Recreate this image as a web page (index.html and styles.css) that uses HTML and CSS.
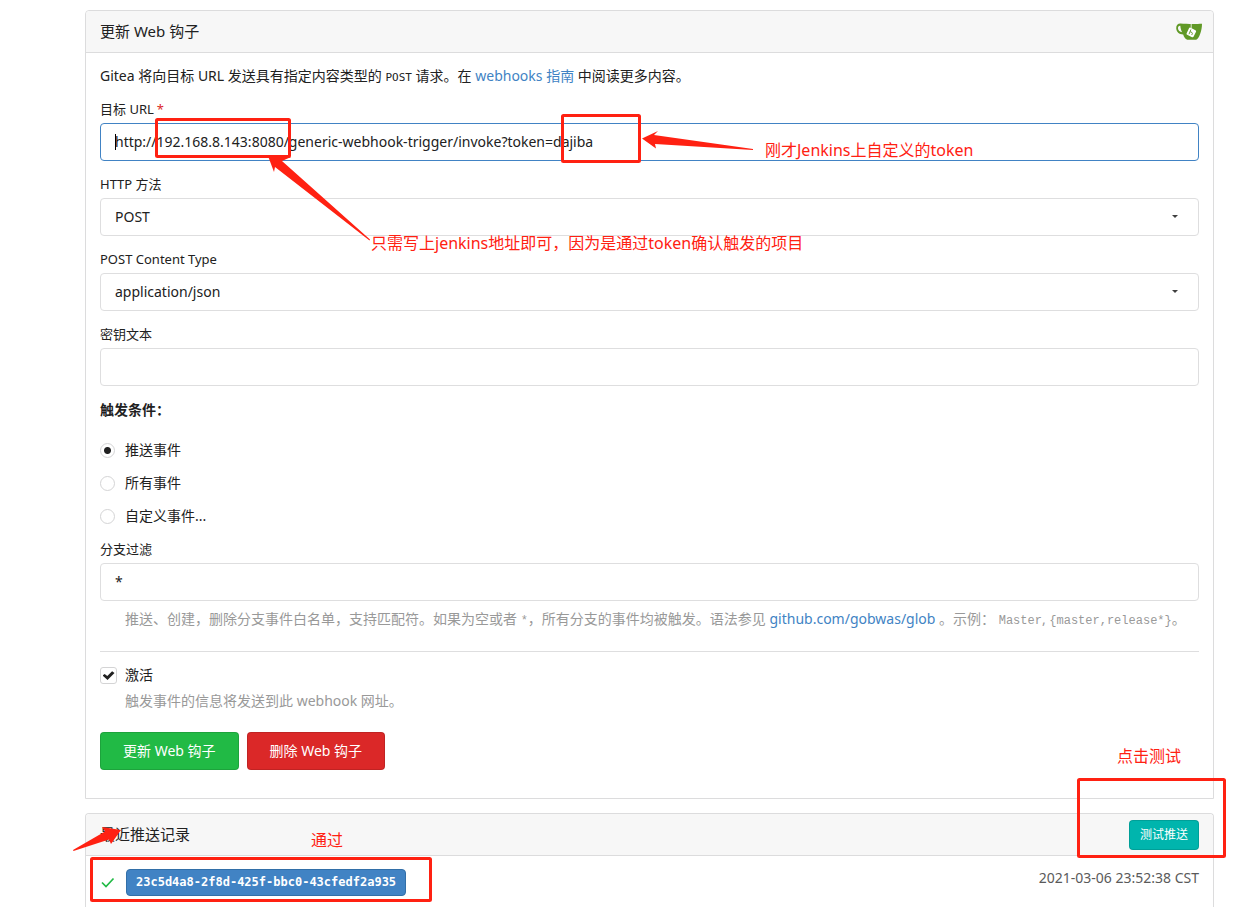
FILE: index.html
```html
<!DOCTYPE html>
<html lang="zh-CN">
<head>
<meta charset="utf-8">
<meta name="viewport" content="width=device-width, initial-scale=1">
<title>更新 Web 钩子</title>
<link rel="stylesheet" href="styles.css">
</head>
<body>
<main class="page">
  <section class="card">
    <header class="card-header">
      <h1 class="title">更新 Web 钩子</h1>
      <svg class="logo" viewBox="0 0 26 18" aria-label="Gitea">
        <path fill="#609926" fill-rule="evenodd" d="M4.500 .6C2 .5 0 2.300 .2 5.300C.4 9.200 3 11.200 7.200 11.500C7.800 13.900 9.400 16 11.200 16.700H20.200C23.200 15.600 26 7.500 26 1V.8C20 1.200 10 1.100 4.500 .6ZM4.300 2.800C4.600 5.400 5.100 7.700 6.200 9.200C3.700 8.900 2.100 7.600 2 5.200C1.900 3.500 2.900 2.600 4.300 2.800Z"/>
        <path d="M15.200 1V5.600" stroke="#fff" stroke-width=".8"/>
        <rect x="11.500" y="5.500" width="7.800" height="7.800" rx="1.200" fill="#fff" transform="rotate(26 15.200 9.300)"/>
        <path d="M14.900 6.500L13 11.200M14.100 8.700L16 9.500Q16.700 9.900 16.300 10.800L15.700 12" fill="none" stroke="#609926" stroke-width=".9"/>
      </svg>
    </header>
    <form class="card-body" onsubmit="return false">
      <p class="intro">Gitea 将向目标 URL 发送具有指定内容类型的 <code>POST</code> 请求。在 <a href="#guide">webhooks 指南</a> 中阅读更多内容。</p>
      <div class="field">
        <label for="url">目标 URL<span class="required">*</span></label>
        <div class="control">
          <input class="input focused" id="url" type="text" value="http://192.168.8.143:8080/generic-webhook-trigger/invoke?token=dajiba">
          <span class="caret"></span>
        </div>
      </div>
      <div class="field">
        <label for="method">HTTP 方法</label>
        <div class="control">
          <select class="input" id="method"><option>POST</option><option>GET</option></select>
          <span class="arrow"></span>
        </div>
      </div>
      <div class="field">
        <label for="ctype">POST Content Type</label>
        <div class="control">
          <select class="input" id="ctype"><option>application/json</option></select>
          <span class="arrow"></span>
        </div>
      </div>
      <div class="field">
        <label for="secret">密钥文本</label>
        <input class="input" id="secret" type="password">
      </div>
      <fieldset class="events">
        <legend>触发条件：</legend>
        <label class="choice"><input type="radio" name="events" checked><span>推送事件</span></label>
        <label class="choice"><input type="radio" name="events"><span>所有事件</span></label>
        <label class="choice"><input type="radio" name="events"><span>自定义事件...</span></label>
      </fieldset>
      <div class="field">
        <label for="branch">分支过滤</label>
        <input class="input" id="branch" type="text" value="*">
        <p class="help branch-help">推送、创建，删除分支事件白名单，支持匹配符。如果为空或者 <code>*</code>，所有分支的事件均被触发。语法参见 <a href="#glob">github.com/gobwas/glob</a> 。示例： <code>Master</code>, <code>{master,release*}</code>。</p>
      </div>
      <hr class="divider">
      <div class="active">
        <label class="choice"><input type="checkbox" checked><span>激活</span></label>
        <p class="help">触发事件的信息将发送到此 webhook 网址。</p>
      </div>
      <div class="actions">
        <button class="button green" type="submit">更新 Web 钩子</button>
        <button class="button red" type="button">删除 Web 钩子</button>
      </div>
    </form>
  </section>

  <section class="card history">
    <header class="card-header">
      <h2 class="title">最近推送记录</h2>
      <button class="button teal" type="button">测试推送</button>
    </header>
    <div class="card-body delivery">
      <svg class="check" viewBox="0 0 15 18" aria-hidden="true"><path d="M2 8.500L6 12.500L13.500 4.500" fill="none" stroke="#21ba45" stroke-width="1.700"/></svg>
      <a class="uuid" href="#delivery">23c5d4a8-2f8d-425f-bbc0-43cfedf2a935</a>
      <time class="time">2021-03-06 23:52:38 CST</time>
    </div>
  </section>

  <div class="notes">
    <svg class="marks" width="1250" height="907" viewBox="0 0 1250 907" aria-hidden="true">
      <g fill="none" stroke="#ff2112" stroke-width="3">
        <rect x="156.500" y="119.500" width="133" height="37" rx="1"/>
        <rect x="562.500" y="115.500" width="77" height="46" rx="1"/>
        <rect x="1078.500" y="779.500" width="146" height="77" rx="1"/>
        <rect x="91.500" y="858.500" width="339" height="42" rx="1"/>
      </g>
      <g fill="#ff2112">
        <path d="M642 138.500L658 131L654 135L753 149V150L655 144L656 148.500Z"/>
        <path d="M268 156L291 157L282 161L370 239.500L369.500 240.500L275 167L274 172Z"/>
        <path d="M121 830L102 827L105 831.500L73 850L73.500 851L109 839.500L111 844Z"/>
      </g>
    </svg>
    <span class="note note-token">刚才Jenkins上自定义的token</span>
    <span class="note note-address">只需写上jenkins地址即可，因为是通过token确认触发的项目</span>
    <span class="note note-test">点击测试</span>
    <span class="note note-pass">通过</span>
  </div>
</main>
</body>
</html>
```
FILE: styles.css
```css
* { box-sizing: border-box; }
body {
  margin: 0;
  background: #fff;
  color: #212121;
  font: 14px/19px "Noto Sans", "Noto Sans CJK SC", sans-serif;
}
h1, h2, p, fieldset, legend { margin: 0; padding: 0; }
a { color: #4183c4; text-decoration: none; }
code { font: 11px "DejaVu Sans Mono", monospace; }
input, select, button { font: inherit; color: inherit; }
.page {
  position: relative;
  display: flex;
  flex-direction: column;
  gap: 14px;
  height: 100vh;
  padding: 10px 36px 0 85px;
  overflow: hidden;
}
.card {
  flex: none;
  border: 1px solid #dcdcdd;
  border-radius: 4px 4px 0 0;
}
.history { flex: 1 0 auto; border-bottom: 0; }
.card-header {
  display: flex;
  align-items: center;
  justify-content: space-between;
  height: 42px;
  padding: 0 14px;
  border-bottom: 1px solid #dcdcdd;
  border-radius: 4px 4px 0 0;
  background: #f7f7f7;
}
.title { padding-bottom: 2px; font-size: 15px; font-weight: 400; line-height: 20px; }
.logo { width: 26px; height: 18px; margin-right: -3px; }
.card-body {
  display: flex;
  flex-direction: column;
  gap: 14px;
  padding: 13px 14px 28px;
}
.intro { margin-bottom: 1px; }
.field { display: flex; flex-direction: column; }
.field > label { margin-bottom: 5px; font-size: 13px; line-height: 18px; }
.required { margin-left: 3px; color: #db2828; }
.control { position: relative; }
.input {
  display: block;
  width: 100%;
  height: 38px;
  padding: 0 14px 2px;
  border: 1px solid #dededf;
  border-radius: 4px;
  background: #fff;
  outline: 0;
  appearance: none;
}
.focused { border-color: #4183c4; }
.caret {
  position: absolute;
  top: 11px;
  left: 15px;
  width: 1px;
  height: 16px;
  background: #000;
}
.arrow {
  position: absolute;
  top: 17px;
  right: 21px;
  border: 3px solid transparent;
  border-top-color: #404040;
  border-bottom: 0;
}
.events {
  display: flex;
  flex-direction: column;
  gap: 14px;
  border: 0;
}
.events legend { margin-bottom: 22px; font-weight: 700; }
.choice { display: flex; align-items: center; gap: 10px; height: 19px; }
.choice span { padding-bottom: 2px; }
.choice input {
  width: 15px;
  height: 15px;
  margin: 0;
  border: 1px solid #d4d4d5;
  border-radius: 50%;
  appearance: none;
}
.choice input[type="radio"]:checked { background: radial-gradient(circle, #212121 3px, #fff 4px); }
.choice input[type="checkbox"] {
  display: grid;
  place-items: center;
  width: 17px;
  height: 17px;
  border-radius: 3px;
}
.choice input[type="checkbox"]::before {
  content: "";
  width: 12px;
  height: 10px;
  background: #212121;
  clip-path: polygon(0 50%, 18% 34%, 40% 56%, 80% 8%, 100% 24%, 42% 96%);
}
.active .choice { gap: 8px; }
.help { padding-left: 25px; color: #999; }
.help code { font: 12px "Liberation Mono", monospace; }
.branch-help { margin-top: 8px; margin-bottom: 1px; }
.divider {
  width: 100%;
  margin: 8px 0 0;
  border: 0;
  border-top: 1px solid #dededf;
}
.active { display: flex; flex-direction: column; gap: 6px; margin-bottom: 1px; }
.actions { display: flex; gap: 8px; margin-top: 7px; }
.button {
  height: 38px;
  padding: 0 22px 2px;
  border: 1px solid rgba(0, 0, 0, 0.12);
  border-radius: 4px;
  color: #fff;
}
.green { background: #21ba45; }
.red { background: #db2828; }
.teal { height: 30px; padding: 0 10px; background: #00b5ad; font-size: 12px; }
.delivery { flex-direction: row; align-items: center; gap: 11px; }
.check { width: 15px; height: 18px; }
.uuid {
  padding: 4px 9px;
  border: 1px solid #326fa8;
  border-radius: 4px;
  background: #4183c4;
  color: #fff;
  font: 700 12px/17px "DejaVu Sans Mono", monospace;
}
.time { margin-left: auto; align-self: flex-start; color: #5a5a5a; line-height: 17px; }
.notes { position: absolute; top: 0; left: 0; pointer-events: none; }
.marks { display: block; }
.note {
  position: absolute;
  color: #ff2112;
  font-size: 16px;
  line-height: 22px;
  white-space: nowrap;
}
.note-token { top: 139px; left: 765px; }
.note-address { top: 232px; left: 371px; }
.note-test { top: 745px; left: 1117px; }
.note-pass { top: 829px; left: 311px; }
```
